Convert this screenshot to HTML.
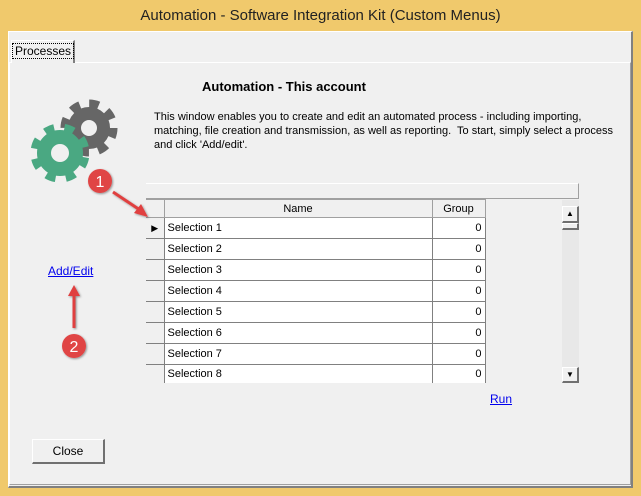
<!DOCTYPE html>
<html><head><style>
*{margin:0;padding:0;box-sizing:border-box}
body{width:641px;height:496px;background:#f0c96c;position:relative;overflow:hidden;font-family:"Liberation Sans",Arial,sans-serif;}
.abs{position:absolute}
#title{left:0;top:0;width:641px;height:31px;text-align:center;font-size:15px;line-height:32px;color:#222}
#client{left:8px;top:31px;width:625px;height:457px;background:#f0f0f0;border-right:2px solid #808080;border-bottom:2px solid #808080;border-left:1px solid #fff;border-top:1px solid #fff}
#panel{left:9px;top:62px;width:622px;height:423px;border-top:1px solid #fff;border-left:1px solid #fff;border-right:1px solid #a0a0a0;border-bottom:1px solid #a0a0a0}
#tab{left:11px;top:40px;width:64px;height:23px;background:#f0f0f0;border-top:1px solid #fff;border-left:1px solid #fff;border-right:2px solid #808080;font-size:12px;line-height:20px;text-align:center}
#tab span{border:1px dotted #000;padding:0 2px}
.t{font-size:11px;color:#000;white-space:nowrap}
table{border-collapse:collapse;position:absolute;left:146px;top:199px;font-size:11px}
td{height:21px;border:1px solid #808080;background:#fff;padding:0 3px}
td.sel{background:#f0f0f0;width:18px;border-left:none}
th{height:18px;background:#f0f0f0;border:1px solid #a0a0a0;font-weight:normal;font-size:11px}
.btn{background:#f0f0f0;border-top:1px solid #fff;border-left:1px solid #fff;border-right:2px solid #707070;border-bottom:2px solid #707070;text-align:center;font-size:12px}
a{color:#0000ee;text-decoration:underline;font-size:12px}
</style></head><body>
<div id="title" class="abs">Automation - Software Integration Kit (Custom Menus)</div>
<div id="client" class="abs"></div>
<div id="panel" class="abs"></div>
<div id="tab" class="abs"><span>Processes</span></div>
<div class="abs" style="left:202px;top:79px;font-size:13px;font-weight:bold;">Automation - This account</div>
<div class="abs t" style="left:154px;top:110px;line-height:14px;">This window enables you to create and edit an automated process - including importing,<br>matching, file creation and transmission, as well as reporting.&nbsp; To start, simply select a process<br>and click 'Add/edit'.</div>
<svg class="abs" style="left:20px;top:95px" width="110" height="90">
<g transform="translate(69,33)"><circle r="24" fill="none" stroke="#666" stroke-width="9" stroke-dasharray="9.5 9.35"/><circle r="14.5" fill="none" stroke="#666" stroke-width="13"/></g>
<g transform="translate(40,58)"><circle r="25" fill="none" stroke="#4aa882" stroke-width="9" stroke-dasharray="9.5 10.1" transform="rotate(10)"/><circle r="16" fill="none" stroke="#4aa882" stroke-width="14"/></g>
</svg>
<div class="abs" style="left:146px;top:183px;width:433px;height:16px;background:#f0f0f0;border-top:1px solid #fff;border-right:1px solid #a0a0a0;border-bottom:1px solid #a0a0a0"></div>
<div class="abs" style="left:146px;top:199px;width:433px;height:184px;background:#f0f0f0"></div>
<table>
<tr><th style="width:18px;border-left:none"></th><th style="width:268px">Name</th><th style="width:53px">Group</th></tr>
<tr><td class="sel" style="font-size:9px;text-align:center">&#9654;</td><td>Selection 1</td><td style="text-align:right">0</td></tr>
<tr><td class="sel"></td><td>Selection 2</td><td style="text-align:right">0</td></tr>
<tr><td class="sel"></td><td>Selection 3</td><td style="text-align:right">0</td></tr>
<tr><td class="sel"></td><td>Selection 4</td><td style="text-align:right">0</td></tr>
<tr><td class="sel"></td><td>Selection 5</td><td style="text-align:right">0</td></tr>
<tr><td class="sel"></td><td>Selection 6</td><td style="text-align:right">0</td></tr>
<tr><td class="sel"></td><td>Selection 7</td><td style="text-align:right">0</td></tr>
<tr><td class="sel" style="height:19px"></td><td style="height:19px">Selection 8</td><td style="text-align:right;height:19px">0</td></tr>
</table>
<div class="abs" style="left:562px;top:200px;width:17px;height:183px;background:#e8e8e8"></div>
<div class="abs btn" style="left:562px;top:206px;width:17px;height:17px;font-size:8px;line-height:14px">&#9650;</div>
<div class="abs btn" style="left:562px;top:223px;width:17px;height:7px"></div>
<div class="abs btn" style="left:562px;top:367px;width:17px;height:16px;font-size:8px;line-height:14px">&#9660;</div>
<div class="abs" style="left:146px;top:383px;width:434px;height:4px;background:#f0f0f0"></div>
<a class="abs" style="left:48px;top:264px">Add/Edit</a>
<a class="abs" style="left:490px;top:392px">Run</a>
<div class="abs btn" style="left:32px;top:439px;width:73px;height:25px;line-height:23px">Close</div>
<svg class="abs" style="left:0;top:0" width="641" height="496">
<defs><filter id="s"><feDropShadow dx="1" dy="1" stdDeviation="1" flood-opacity="0.4"/></filter></defs>
<g filter="url(#s)">
<line x1="113" y1="192" x2="140" y2="210" stroke="#e04040" stroke-width="3"/>
<polygon points="148,217 134,213 141,204" fill="#e04040"/>
<circle cx="100" cy="181" r="12" fill="#e04545"/>
<line x1="74" y1="328" x2="74" y2="294" stroke="#e04040" stroke-width="3"/>
<polygon points="74,285 68,296 80,296" fill="#e04040"/>
<circle cx="74" cy="346" r="12" fill="#e04545"/>
</g>
<text x="100" y="187" fill="#fff" font-size="16" text-anchor="middle" font-family="Liberation Sans">1</text>
<text x="74" y="352" fill="#fff" font-size="16" text-anchor="middle" font-family="Liberation Sans">2</text>
</svg>
</body></html>
